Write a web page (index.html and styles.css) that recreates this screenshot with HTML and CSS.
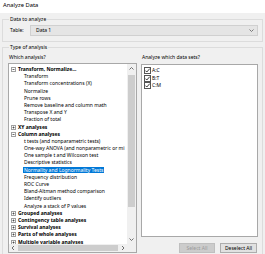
FILE: index.html
```html
<!DOCTYPE html>
<html lang="en">
<head>
    <meta charset="UTF-8">
    <title>Analyze Data</title>
    <link rel="stylesheet" href="styles.css">
</head>
<body>
    <div class="titlebar">Analyze Data</div>

    <fieldset class="group group-data">
        <legend>Data to analyze</legend>
        <div class="table-row">
            <span class="table-label">Table:</span>
            <div class="dropdown">
                <span>Data 1</span>
                <svg class="drop-arrow" width="5" height="3" viewBox="0 0 5 3"><path d="M0.5 0.5 L2.5 2.5 L4.5 0.5" fill="none" stroke="#6d6d6d" stroke-width="0.9"/></svg>
            </div>
        </div>
    </fieldset>

    <fieldset class="group group-type">
        <legend>Type of analysis</legend>
        <div class="analysis-grid">
            <div class="col-left">
                <div class="col-label">Which analysis?</div>
                <div class="listbox">
                    <ul class="tree">
                        <li class="node"><svg class="exp" width="5" height="5" viewBox="0 0 5 5"><rect x="0.5" y="0.5" width="4" height="4" fill="#fff" stroke="#a0a0a0"/><path d="M1.5 2.5 H3.5" stroke="#444" stroke-width="0.8"/></svg><b>Transform, Normalize...</b></li>
                        <li class="leaf">Transform</li>
                        <li class="leaf">Transform concentrations (X)</li>
                        <li class="leaf">Normalize</li>
                        <li class="leaf">Prune rows</li>
                        <li class="leaf">Remove baseline and column math</li>
                        <li class="leaf">Transpose X and Y</li>
                        <li class="leaf">Fraction of total</li>
                        <li class="node"><svg class="exp" width="5" height="5" viewBox="0 0 5 5"><rect x="0.5" y="0.5" width="4" height="4" fill="#fff" stroke="#a0a0a0"/><path d="M1.5 2.5 H3.5 M2.5 1.5 V3.5" stroke="#444" stroke-width="0.8"/></svg><b>XY analyses</b></li>
                        <li class="node"><svg class="exp" width="5" height="5" viewBox="0 0 5 5"><rect x="0.5" y="0.5" width="4" height="4" fill="#fff" stroke="#a0a0a0"/><path d="M1.5 2.5 H3.5" stroke="#444" stroke-width="0.8"/></svg><b>Column analyses</b></li>
                        <li class="leaf">t tests (and nonparametric tests)</li>
                        <li class="leaf">One-way ANOVA (and nonparametric or mi</li>
                        <li class="leaf">One sample t and Wilcoxon test</li>
                        <li class="leaf">Descriptive statistics</li>
                        <li class="leaf"><span class="selected">Normality and Lognormality Tests</span></li>
                        <li class="leaf">Frequency distribution</li>
                        <li class="leaf">ROC Curve</li>
                        <li class="leaf">Bland-Altman method comparison</li>
                        <li class="leaf">Identify outliers</li>
                        <li class="leaf">Analyze a stack of P values</li>
                        <li class="node"><svg class="exp" width="5" height="5" viewBox="0 0 5 5"><rect x="0.5" y="0.5" width="4" height="4" fill="#fff" stroke="#a0a0a0"/><path d="M1.5 2.5 H3.5 M2.5 1.5 V3.5" stroke="#444" stroke-width="0.8"/></svg><b>Grouped analyses</b></li>
                        <li class="node"><svg class="exp" width="5" height="5" viewBox="0 0 5 5"><rect x="0.5" y="0.5" width="4" height="4" fill="#fff" stroke="#a0a0a0"/><path d="M1.5 2.5 H3.5 M2.5 1.5 V3.5" stroke="#444" stroke-width="0.8"/></svg><b>Contingency table analyses</b></li>
                        <li class="node"><svg class="exp" width="5" height="5" viewBox="0 0 5 5"><rect x="0.5" y="0.5" width="4" height="4" fill="#fff" stroke="#a0a0a0"/><path d="M1.5 2.5 H3.5 M2.5 1.5 V3.5" stroke="#444" stroke-width="0.8"/></svg><b>Survival analyses</b></li>
                        <li class="node"><svg class="exp" width="5" height="5" viewBox="0 0 5 5"><rect x="0.5" y="0.5" width="4" height="4" fill="#fff" stroke="#a0a0a0"/><path d="M1.5 2.5 H3.5 M2.5 1.5 V3.5" stroke="#444" stroke-width="0.8"/></svg><b>Parts of whole analyses</b></li>
                        <li class="node"><svg class="exp" width="5" height="5" viewBox="0 0 5 5"><rect x="0.5" y="0.5" width="4" height="4" fill="#fff" stroke="#a0a0a0"/><path d="M1.5 2.5 H3.5 M2.5 1.5 V3.5" stroke="#444" stroke-width="0.8"/></svg><b>Multiple variable analyses</b></li>
                    </ul>
                    <div class="vscroll">
                        <svg class="arrow" width="9" height="9" viewBox="0 0 9 9"><path d="M2.5 5.5 L4.5 3.5 L6.5 5.5" fill="none" stroke="#606060" stroke-width="0.9"/></svg>
                        <div class="vtrack"><div class="vthumb"></div></div>
                        <svg class="arrow" width="9" height="9" viewBox="0 0 9 9"><path d="M2.5 3.5 L4.5 5.5 L6.5 3.5" fill="none" stroke="#606060" stroke-width="0.9"/></svg>
                    </div>
                    <div class="hscroll">
                        <svg class="arrow" width="9" height="8" viewBox="0 0 9 8"><path d="M5 2 L3 4 L5 6" fill="none" stroke="#606060" stroke-width="0.9"/></svg>
                        <div class="htrack"><div class="hthumb"></div></div>
                        <svg class="arrow" width="9" height="8" viewBox="0 0 9 8"><path d="M4 2 L6 4 L4 6" fill="none" stroke="#606060" stroke-width="0.9"/></svg>
                    </div>
                    <div class="corner"></div>
                </div>
            </div>

            <div class="col-right">
                <div class="col-label">Analyze which data sets?</div>
                <div class="datasets">
                    <label class="ds"><svg class="cb" width="7" height="7" viewBox="0 0 7 7"><rect x="0.5" y="0.5" width="6" height="6" fill="#fff" stroke="#555"/><path d="M1.4 3.6 L2.8 5 L5.8 1.6" fill="none" stroke="#222" stroke-width="0.9"/></svg>A:C</label>
                    <label class="ds"><svg class="cb" width="7" height="7" viewBox="0 0 7 7"><rect x="0.5" y="0.5" width="6" height="6" fill="#fff" stroke="#555"/><path d="M1.4 3.6 L2.8 5 L5.8 1.6" fill="none" stroke="#222" stroke-width="0.9"/></svg>B:T</label>
                    <label class="ds"><svg class="cb" width="7" height="7" viewBox="0 0 7 7"><rect x="0.5" y="0.5" width="6" height="6" fill="#fff" stroke="#555"/><path d="M1.4 3.6 L2.8 5 L5.8 1.6" fill="none" stroke="#222" stroke-width="0.9"/></svg>C:M</label>
                </div>
                <div class="buttons">
                    <button class="btn btn-disabled" disabled>Select All</button>
                    <button class="btn">Deselect All</button>
                </div>
            </div>
        </div>
    </fieldset>
</body>
</html>
```

FILE: styles.css
```css
* {
    box-sizing: border-box;
}

body {
    margin: 0;
    width: 265px;
    height: 254px;
    overflow: hidden;
    background: #f0f0f0;
    color: #000;
    font-family: "Noto Sans", "Open Sans", sans-serif;
    font-size: 5px;
    line-height: 7px;
}

.titlebar {
    height: 13px;
    background: #fff;
    padding: 2px 0 0 3px;
    font-size: 5.8px;
    line-height: 7px;
}

.group {
    margin: 0 2px;
    border: 1px solid #dcdcdc;
    padding: 0 4px 0 5px;
    min-width: 0;
}

.group legend {
    padding: 0 1px;
    margin-left: 1px;
    line-height: 7px;
}

.group-data {
    margin-top: 3px;
    padding-top: 2px;
    padding-bottom: 5px;
}

.table-row {
    display: flex;
    align-items: center;
}

.table-label {
    width: 22px;
    padding-left: 2px;
}

.dropdown {
    flex: 1;
    height: 11px;
    background: #e5e5e5;
    border: 1px solid #d0d0d0;
    display: flex;
    align-items: center;
    justify-content: space-between;
    padding: 0 3px 0 5px;
}

.group-type {
    margin-top: 2px;
    padding-top: 3px;
    height: 220px;
}

.analysis-grid {
    display: grid;
    grid-template-columns: 129px 117px;
    gap: 4px;
}

.col-label {
    padding-left: 1px;
    height: 9px;
}

.listbox {
    height: 190px;
    background: #fff;
    border: 1px solid #a8a8a8;
    display: grid;
    grid-template-columns: 1fr 9px;
    grid-template-rows: 1fr 8px;
}

.tree {
    list-style: none;
    margin: 0;
    padding: 2px 0 0 2px;
    overflow: hidden;
    white-space: nowrap;
    line-height: 7.2px;
}

.tree li {
    height: 7.2px;
}

.node {
    display: flex;
    align-items: center;
    gap: 2px;
}

.node b {
    font-weight: 700;
}

.leaf {
    padding-left: 13px;
}

.selected {
    background: #0078d7;
    color: #fff;
    padding: 0 1px;
    margin-left: -1px;
}

.vscroll {
    background: #f0f0f0;
    display: flex;
    flex-direction: column;
}

.vtrack {
    flex: 1;
    padding: 2px 1px 0;
}

.vthumb {
    height: 132px;
    background: #cdcdcd;
}

.hscroll {
    background: #f0f0f0;
    display: flex;
    align-items: center;
}

.htrack {
    flex: 1;
    height: 100%;
    padding: 1px 0;
}

.hthumb {
    height: 100%;
    background: #cdcdcd;
}

.corner {
    background: #f0f0f0;
}

.col-right {
    display: flex;
    flex-direction: column;
}

.datasets {
    margin-top: 1px;
    height: 173px;
    background: #fff;
    border: 1px solid #a8a8a8;
    padding: 2px 0 0 2px;
}

.ds {
    display: flex;
    align-items: center;
    gap: 1px;
    height: 7.5px;
}

.buttons {
    display: flex;
    justify-content: flex-end;
    gap: 5px;
    margin-top: 6px;
    padding-right: 1px;
}

.btn {
    font-family: inherit;
    font-size: 5px;
    line-height: 7px;
    height: 10px;
    padding: 0;
    background: #e1e1e1;
    border: 1px solid #adadad;
    color: #000;
}

.btn-disabled {
    width: 36px;
    background: #cccccc;
    border-color: #bfbfbf;
    color: #9a9a9a;
}

.btn:not(.btn-disabled) {
    width: 37px;
}
```
